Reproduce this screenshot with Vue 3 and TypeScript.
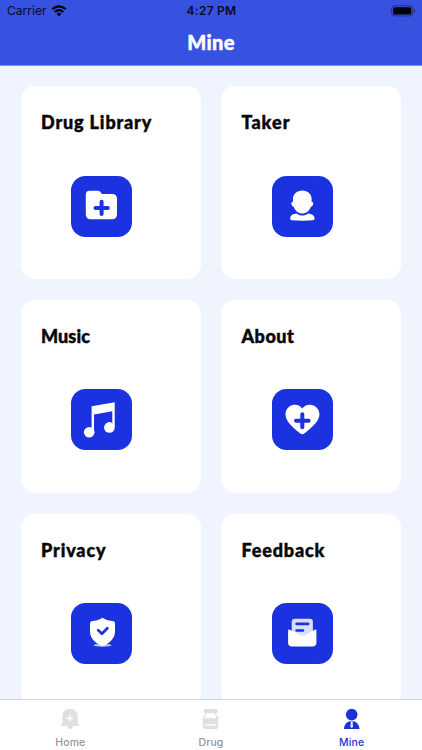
<script setup lang="ts">
interface Card {
  title: string
  icon: 'folder' | 'person' | 'music' | 'heart' | 'shield' | 'mail'
}

const cards: Card[] = [
  { title: 'Drug Library', icon: 'folder' },
  { title: 'Taker', icon: 'person' },
  { title: 'Music', icon: 'music' },
  { title: 'About', icon: 'heart' },
  { title: 'Privacy', icon: 'shield' },
  { title: 'Feedback', icon: 'mail' },
]
</script>

<template>
  <div class="screen">
    <header class="header">
      <div class="status">
        <div class="carrier">
          <span>Carrier</span>
          <svg class="wifi" viewBox="0 0 16 12">
            <path d="M1.2 4.3Q8 -1.7 14.8 4.3" fill="none" stroke="currentColor" stroke-width="2.2" />
            <path d="M3.7 7Q8 3.2 12.3 7" fill="none" stroke="currentColor" stroke-width="2" />
            <path d="M5.5 8.8Q8 6.8 10.5 8.8L8 11.4Z" fill="currentColor" />
          </svg>
        </div>
        <span class="time">4:27 PM</span>
        <svg class="battery" viewBox="0 0 25 12">
          <rect x=".7" y=".7" width="21" height="10.2" rx="3" fill="none" stroke="#000" stroke-opacity=".42" />
          <rect x="2.2" y="2.2" width="18" height="7.2" rx="1.5" />
          <path d="M23 4v3.7q1.2-.6 1.2-1.85T23 4Z" fill-opacity=".45" />
        </svg>
      </div>
      <h1>Mine</h1>
    </header>

    <main class="grid">
      <section v-for="card in cards" :key="card.title" class="card">
        <h2 :class="card.icon">{{ card.title }}</h2>
        <div class="tile">
          <svg v-if="card.icon === 'folder'" viewBox="0 0 61 61">
            <path d="M18.6 14.8h8.2q2.2 0 3.2 1.9l.8 1.4h10.4q4.8 0 4.8 4.8v15.3q0 5-5 5H19.8q-5 0-5-5V18.6q0-3.8 3.8-3.8Z" fill="#fff" />
            <path d="M30.6 25.7v12.3M24.5 31.9h12.3" stroke="#1a32e0" stroke-width="4" stroke-linecap="round" />
          </svg>
          <svg v-else-if="card.icon === 'person'" viewBox="0 0 61 61">
            <path d="M30.3 14.5c5.6 0 9.3 3.7 9.4 9 0 .9-.1 1.8-.1 2.3 1.7 0 2 1.5 1.4 3-.5 1.4-1.2 2-2.1 1.9-1.3 3.9-5 6.9-8.6 6.9s-7.3-3-8.6-6.9c-.9.1-1.6-.5-2.1-1.9-.6-1.5-.3-3 1.4-3 0-.5-.1-1.4-.1-2.3.1-5.3 3.8-9 9.4-9Z" fill="#fff" />
            <path d="M24.7 37.4c3 2.7 8.3 2.7 11.3 0 4 .3 6.6 2.3 6.6 5.1 0 1.2-.6 1.6-1.8 1.7-6.4.6-14.3.6-20.7 0-1.3-.1-1.9-.6-1.9-1.8 0-2.8 2.5-4.7 6.5-5Z" fill="#fff" />
          </svg>
          <svg v-else-if="card.icon === 'music'" viewBox="0 0 61 61" fill="#fff">
            <path d="M20.6 17.3 43.7 13.2v25.2h-2.4V22.2L23 25.5v18h-2.4Z" />
            <circle cx="18.2" cy="43.3" r="5.3" /><circle cx="38.4" cy="38.4" r="5.3" />
          </svg>
          <svg v-else-if="card.icon === 'heart'" viewBox="0 0 61 61">
            <path d="M30.3 19.5c2.5-3.6 6-4 8.5-3.7 5 .6 8.6 4.6 8.6 9.4 0 6-5.4 11.5-14.7 19q-2.4 1.9-4.8 0C18.6 36.7 13.5 31.2 13.5 25.2c0-4.8 3.5-8.8 8.3-9.4 2.5-.3 6 .1 8.5 3.7Z" fill="#fff" />
            <path d="M30.3 25.3v12.9M24 31.8h12.6" stroke="#1a32e0" stroke-width="4" stroke-linecap="round" />
          </svg>
          <svg v-else-if="card.icon === 'shield'" viewBox="0 0 61 61">
            <ellipse cx="31.5" cy="42.2" rx="9.2" ry="1.5" fill="#bac4fb" />
            <path d="M31.5 14.8c3.8 2.3 7 3 10.5 3.3q2 .2 2 2.2v8.1c0 7.2-5.7 12.1-12.5 14.5-6.8-2.4-12.5-7.3-12.5-14.5v-8.1q0-2 2-2.2c3.5-.3 6.7-1 10.5-3.3Z" fill="#fff" />
            <path d="m27.2 27.1 3.7 3.6 5.5-5.5" fill="none" stroke="#1a32e0" stroke-width="2.7" stroke-linecap="round" stroke-linejoin="round" />
          </svg>
          <svg v-else viewBox="0 0 61 61">
            <rect x="19.7" y="15.7" width="21.2" height="23" rx="3.2" fill="#d9defc" />
            <path d="M24.6 20.9h11.6M24.6 27.5h6.4" stroke="#1a32e0" stroke-width="2.6" stroke-linecap="round" />
            <path d="M16.1 27.4q0-1.3 1.2-.8l11.2 5.7q2 .9 4 0l10.8-5.7q1.1-.5 1.1.8v12.3q0 3.8-3.8 3.8H19.9q-3.8 0-3.8-3.8Z" fill="#fff" />
          </svg>
        </div>
      </section>
    </main>

    <nav class="tabs">
      <div class="tab">
        <svg viewBox="0 0 24 24">
          <path d="M12 1.8c4.9 0 7.6 3.2 7.6 7.6v6.2c0 1.1 1.7 1.7 1.7 3.3H14.8c-.4 2.6-1.5 3.2-2.8 3.2s-2.4-.6-2.8-3.2H2.7c0-1.6 1.7-2.2 1.7-3.3V9.4c0-4.4 2.7-7.6 7.6-7.6Z" fill="currentColor" />
          <path d="M12 8.3v5.8M9.1 11.2h5.8" stroke="#fff" stroke-width="1.5" stroke-linecap="round" />
        </svg>
        <span>Home</span>
      </div>
      <div class="tab">
        <svg viewBox="0 0 24 24">
          <path d="M6 1.9h11.3q1.5 0 1.5 1.5v1.4q0 1.4-1.5 1.4H6q-1.5 0-1.5-1.4V3.4q0-1.5 1.5-1.5ZM6.4 6h1.2L5.6 11.3h12L15.6 6h1.2c.2 1.9 2.6 3.6 2.6 5.6v8.2q0 2.3-2.3 2.3h-11q-2.3 0-2.3-2.3v-8.2C3.8 9.6 6.2 7.9 6.4 6Z" fill="currentColor" />
          <path d="M5.8 17.9h11.6" stroke="#fff" stroke-width="1.3" />
        </svg>
        <span>Drug</span>
      </div>
      <div class="tab active">
        <svg viewBox="0 0 24 24" fill="currentColor">
          <circle cx="11.7" cy="7.6" r="5.8" />
          <path d="M3.9 22.1c.2-4.4 2.4-7 5.6-7.9h4.4c3.2.9 5.4 3.5 5.6 7.9Z" />
          <path d="M10.3 14.2h2.8l-.5 1.4.5 4.2-1.4 1.3-1.4-1.3.5-4.2Z" fill="#e3e7ff" />
        </svg>
        <span>Mine</span>
      </div>
    </nav>
  </div>
</template>

<style>
body { overflow: hidden; }
</style>

<style scoped>
.screen {
  display: flex;
  flex-direction: column;
  height: 750px;
  overflow: hidden;
  background: #eff4fe;
  font-family: Inter, "Liberation Sans", sans-serif;
}
.header {
  flex: none;
  box-sizing: border-box;
  height: 66px;
  border-bottom: 1px solid #7f92f2;
  background: #3751e1;
}
.status {
  display: grid;
  grid-template-columns: 1fr auto 1fr;
  align-items: center;
  height: 22px;
  padding: 0 6px 0 7px;
  color: #080b25;
  font-size: 12px;
}
.carrier { display: flex; align-items: center; gap: 4px; letter-spacing: .05px; }
.carrier span, .time { padding-bottom: 2px; }
.wifi { width: 16px; height: 12px; color: #000; }
.time { font-weight: 600; letter-spacing: .25px; }
.battery { justify-self: end; width: 25px; height: 12px; }
h1, h2 {
  margin: 0;
  font-family: Lato, "Open Sans", sans-serif;
  font-weight: 900;
  -webkit-text-stroke: .45px currentColor;
}
h1 { color: #fff; font-size: 20px; line-height: 40px; text-align: center; letter-spacing: .4px; }
.grid {
  flex: 1;
  min-height: 0;
  display: grid;
  grid-template-columns: 180px 180px;
  grid-auto-rows: 193.3px;
  gap: 20.5px 20.5px;
  align-content: start;
  padding: 20px 20.7px;
  box-sizing: border-box;
  overflow: hidden;
}
.card { padding: 24px 20.3px 0; border-radius: 14px; background: #fff; }
h2 { color: #080808; font-size: 18px; line-height: 24px; white-space: nowrap; letter-spacing: .85px; }
h2.music { letter-spacing: .1px; }
h2.heart { letter-spacing: .5px; }
h2.person { letter-spacing: 1px; }
.tile {
  width: 61px;
  height: 61px;
  margin: 41.5px 0 0 30.5px;
  border-radius: 14.5px;
  background: #1a32e0;
}
.tile svg { display: block; width: 61px; height: 61px; }
.tabs {
  flex: none;
  display: grid;
  grid-template-columns: repeat(3, 1fr);
  height: 50px;
  border-top: 1px solid #d3d5dc;
  background: #fff;
}
.tab {
  display: flex;
  flex-direction: column;
  align-items: center;
  padding-top: 7px;
  color: #e0e0e0;
}
.tab svg { width: 24px; height: 24px; }
.tab span { margin-top: 5px; color: #969696; font-size: 10.5px; font-weight: 500; line-height: 14px; letter-spacing: .15px; }
.tab.active, .tab.active span { color: #1a32d8; }
</style>
